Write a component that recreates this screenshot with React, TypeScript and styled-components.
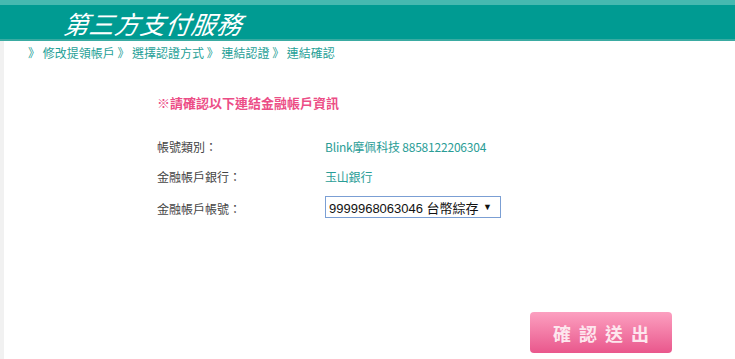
import React from "react";
import styled, { createGlobalStyle } from "styled-components";

const Global = createGlobalStyle`
  html, body { margin: 0; padding: 0; background: #fff; }
  body { font-family: "Noto Sans CJK TC", "Liberation Sans", sans-serif; }
`;

const Page = styled.div`
  width: 735px;
  height: 359px;
  display: flex;
  flex-direction: column;
  background: #fff;
  overflow: hidden;
`;

const Header = styled.header`
  height: 34px;
  border-top: 5px solid #45b9b0;
  border-bottom: 2px solid #3aaba2;
  background: #009b92;
  display: flex;
  align-items: center;
  padding-left: 64px;
`;

const Title = styled.h1`
  margin: 0;
  font-size: 25px;
  font-weight: 400;
  font-style: italic;
  color: #fff;
  letter-spacing: 0.5px;
  line-height: 1;
  transform: skewX(-8deg);
  padding-top: 2px;
`;

const Body = styled.div`
  flex: 1;
  display: flex;
  flex-direction: column;
  border-left: 4px solid #f1f1f1;
`;

const Breadcrumb = styled.nav`
  padding: 3px 0 0 24px;
  font-size: 12px;
  color: #1f9f97;
  line-height: 17px;
  white-space: pre;
`;

const Content = styled.div`
  padding: 34px 0 0 153px;
  display: flex;
  flex-direction: column;
`;

const Notice = styled.div`
  font-size: 13px;
  font-weight: 700;
  color: #ec4d86;
  line-height: 16px;
  margin-bottom: 28px;
`;

const Rows = styled.div`
  display: grid;
  grid-template-columns: 168px auto;
  row-gap: 14px;
  align-items: center;
`;

const Label = styled.div`
  font-size: 12px;
  color: #444;
  line-height: 16px;
`;

const Value = styled.div`
  font-size: 12px;
  color: #2a9d96;
  line-height: 16px;
  letter-spacing: -0.2px;
`;

const Select = styled.div`
  width: 163px;
  height: 20px;
  border: 1px solid #7b9fd4;
  display: flex;
  align-items: center;
  justify-content: space-between;
  padding: 0 8px 0 3px;
  font-family: "Liberation Sans", "Noto Sans CJK TC", sans-serif;
  font-size: 13px;
  color: #111;
  box-sizing: content-box;
  margin-top: -3px;
  justify-self: start;
`;

const Arrow = styled.span`
  font-size: 9px;
`;

const Footer = styled.div`
  flex: 1;
  display: flex;
  justify-content: flex-end;
  align-items: flex-end;
  padding: 0 63px 6px 0;
`;

const SubmitButton = styled.button`
  width: 142px;
  height: 41px;
  border: none;
  border-radius: 4px;
  background: linear-gradient(#fca0c0, #e9578c);
  color: #fde7ee;
  font-family: "Noto Sans CJK TC", sans-serif;
  font-weight: 700;
  font-size: 18px;
  letter-spacing: 8px;
  padding-left: 14px;
  cursor: pointer;
`;

export default function App() {
  return (
    <Page>
      <Global />
      <Header>
        <Title>第三方支付服務</Title>
      </Header>
      <Body>
        <Breadcrumb>》 修改提領帳戶 》 選擇認證方式 》 連結認證 》 連結確認</Breadcrumb>
        <Content>
          <Notice>※請確認以下連結金融帳戶資訊</Notice>
          <Rows>
            <Label>帳號類別：</Label>
            <Value>Blink摩佩科技 8858122206304</Value>
            <Label>金融帳戶銀行：</Label>
            <Value>玉山銀行</Value>
            <Label>金融帳戶帳號：</Label>
            <Select>
              <span>9999968063046 台幣綜存</span>
              <Arrow>▼</Arrow>
            </Select>
          </Rows>
        </Content>
        <Footer>
          <SubmitButton>確認送出</SubmitButton>
        </Footer>
      </Body>
    </Page>
  );
}
